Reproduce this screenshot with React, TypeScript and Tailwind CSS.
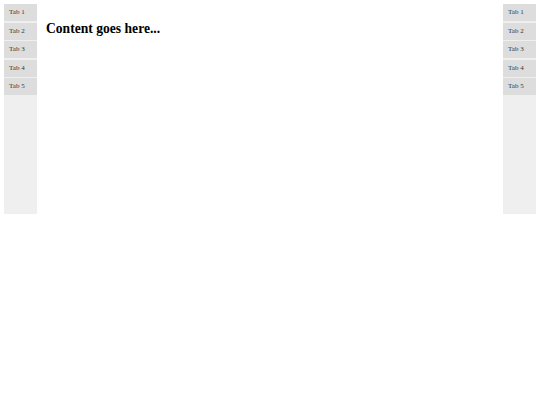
import React from "react";

const tabs = ["Tab 1", "Tab 2", "Tab 3", "Tab 4", "Tab 5"];

function Sidebar() {
  return (
    <div className="w-[33px] h-[210px] bg-[#efefef] flex flex-col gap-[1.5px] shrink-0">
      {tabs.map((t) => (
        <div
          key={t}
          className="h-[17px] bg-[#dddddd] text-[7px] text-[#333] flex items-center pl-[5px] leading-none"
        >
          {t}
        </div>
      ))}
    </div>
  );
}

export default function App() {
  return (
    <div
      className="w-[540px] h-[405px] bg-white flex p-[4px] items-start"
      style={{ fontFamily: '"Liberation Serif", "Times New Roman", serif' }}
    >
      <Sidebar />
      <div className="flex-1 pl-[9px] pt-[17px]">
        <h2 className="text-[13.6px] font-bold text-black leading-[16px]">Content goes here...</h2>
      </div>
      <Sidebar />
    </div>
  );
}
